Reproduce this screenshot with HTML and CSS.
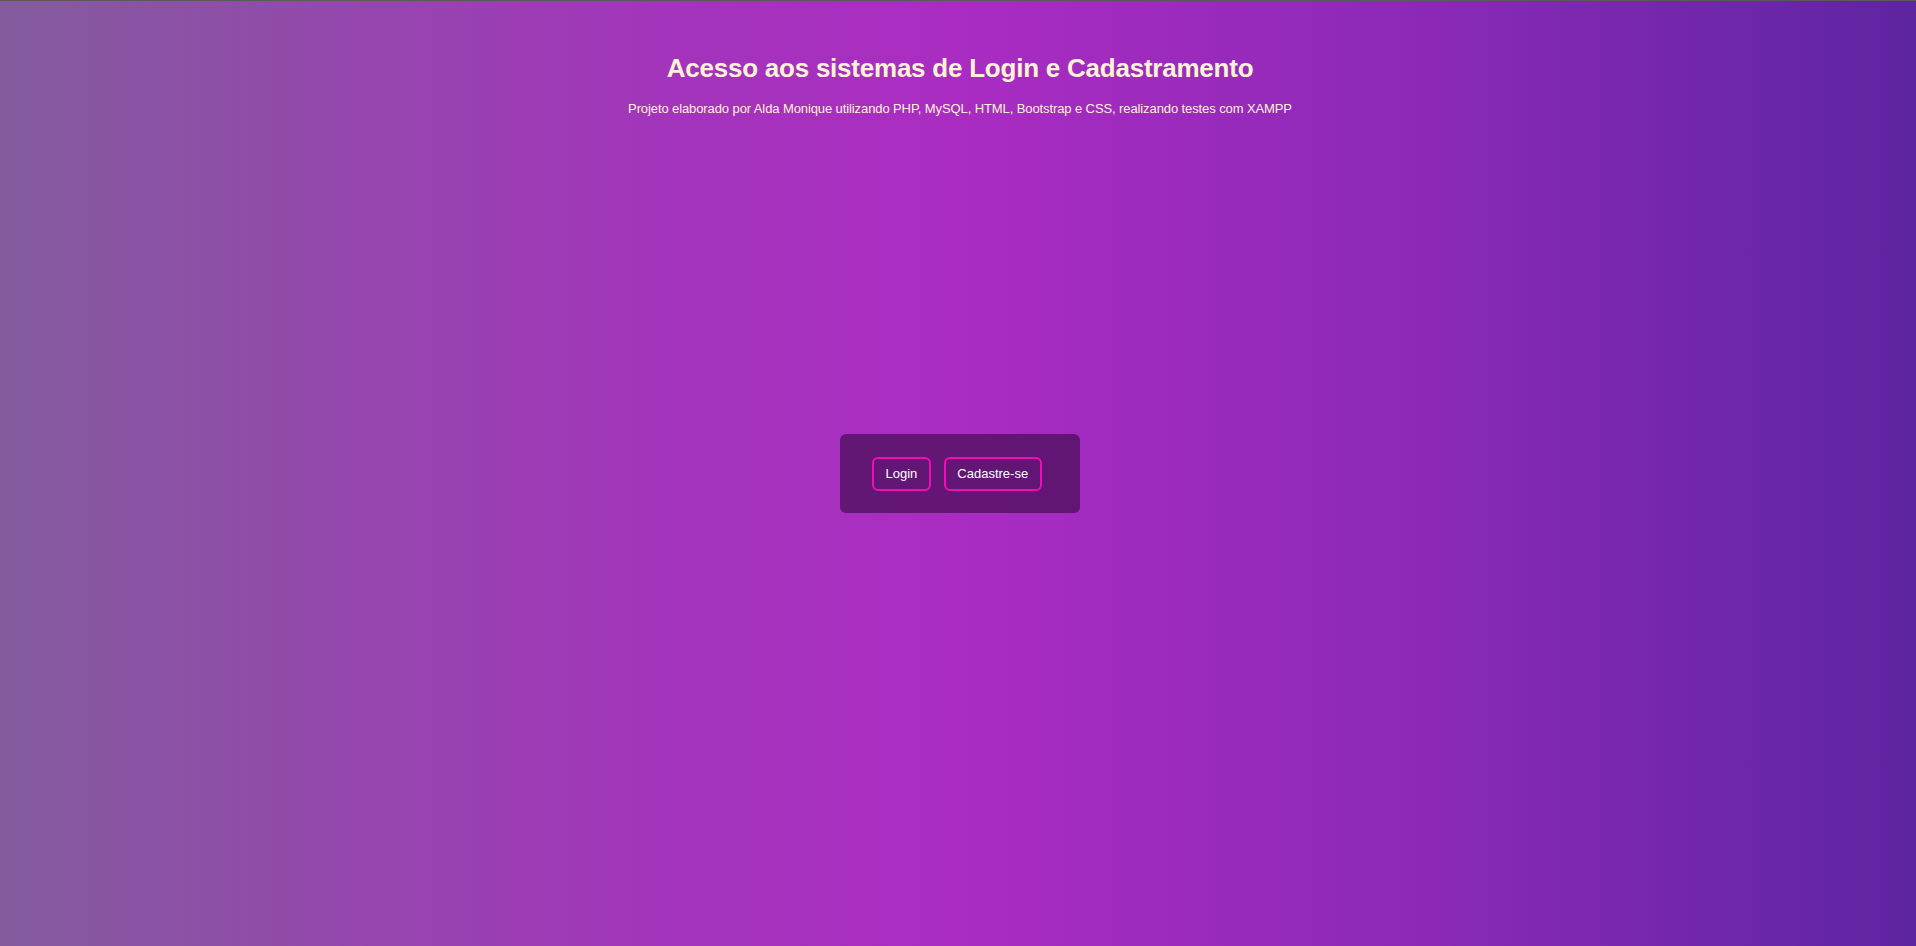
FILE: index.html
```html
<!DOCTYPE html>
<html lang="pt-BR">
<head>
<meta charset="utf-8">
<title>Acesso</title>
<link rel="stylesheet" href="styles.css">
</head>
<body>
<div class="page">
  <header class="header">
    <h1 class="title">Acesso aos sistemas de Login e Cadastramento</h1>
    <p class="subtitle">Projeto elaborado por Alda Monique utilizando PHP, MySQL, HTML, Bootstrap e CSS, realizando testes com XAMPP</p>
  </header>
  <div class="box">
    <a class="btn" href="#">Login</a>
    <a class="btn" href="#">Cadastre-se</a>
  </div>
</div>
</body>
</html>
```
FILE: styles.css
```css
html, body {
  margin: 0;
  padding: 0;
  height: 100%;
}
body {
  font-family: "Liberation Sans", Arial, sans-serif;
  background: linear-gradient(to right, #835c9d 0%, #a334bb 35%, #aa2cc2 50%, #8a29b6 75%, #5d25a0 100%);
  border-top: 1px solid #5a5a5a;
  box-sizing: border-box;
  overflow: hidden;
}
.page {
  position: relative;
  height: 945px;
}
.header {
  text-align: center;
  padding-top: 52px;
  margin-left: 4px;
}
.title {
  margin: 0;
  font-size: 26px;
  font-weight: bold;
  letter-spacing: -0.23px;
  color: #fbf3d5;
  line-height: 30px;
}
.subtitle {
  margin: 18px 0 0;
  font-size: 13px;
  letter-spacing: -0.1px;
  color: #fbf3d5;
  line-height: 16px;
}
.box {
  position: absolute;
  left: 840px;
  top: 433px;
  width: 240px;
  height: 79px;
  box-sizing: border-box;
  background: rgba(30, 0, 40, 0.5);
  border-radius: 6px;
  display: flex;
  align-items: center;
  gap: 13px;
  padding: 0 32px;
}
.btn {
  display: inline-flex;
  align-items: center;
  justify-content: center;
  height: 34px;
  box-sizing: border-box;
  border: 2px solid #f00cb9;
  border-radius: 6px;
  color: #ffffff;
  font-size: 13px;
  text-decoration: none;
  padding: 0 11.5px;
}
```
